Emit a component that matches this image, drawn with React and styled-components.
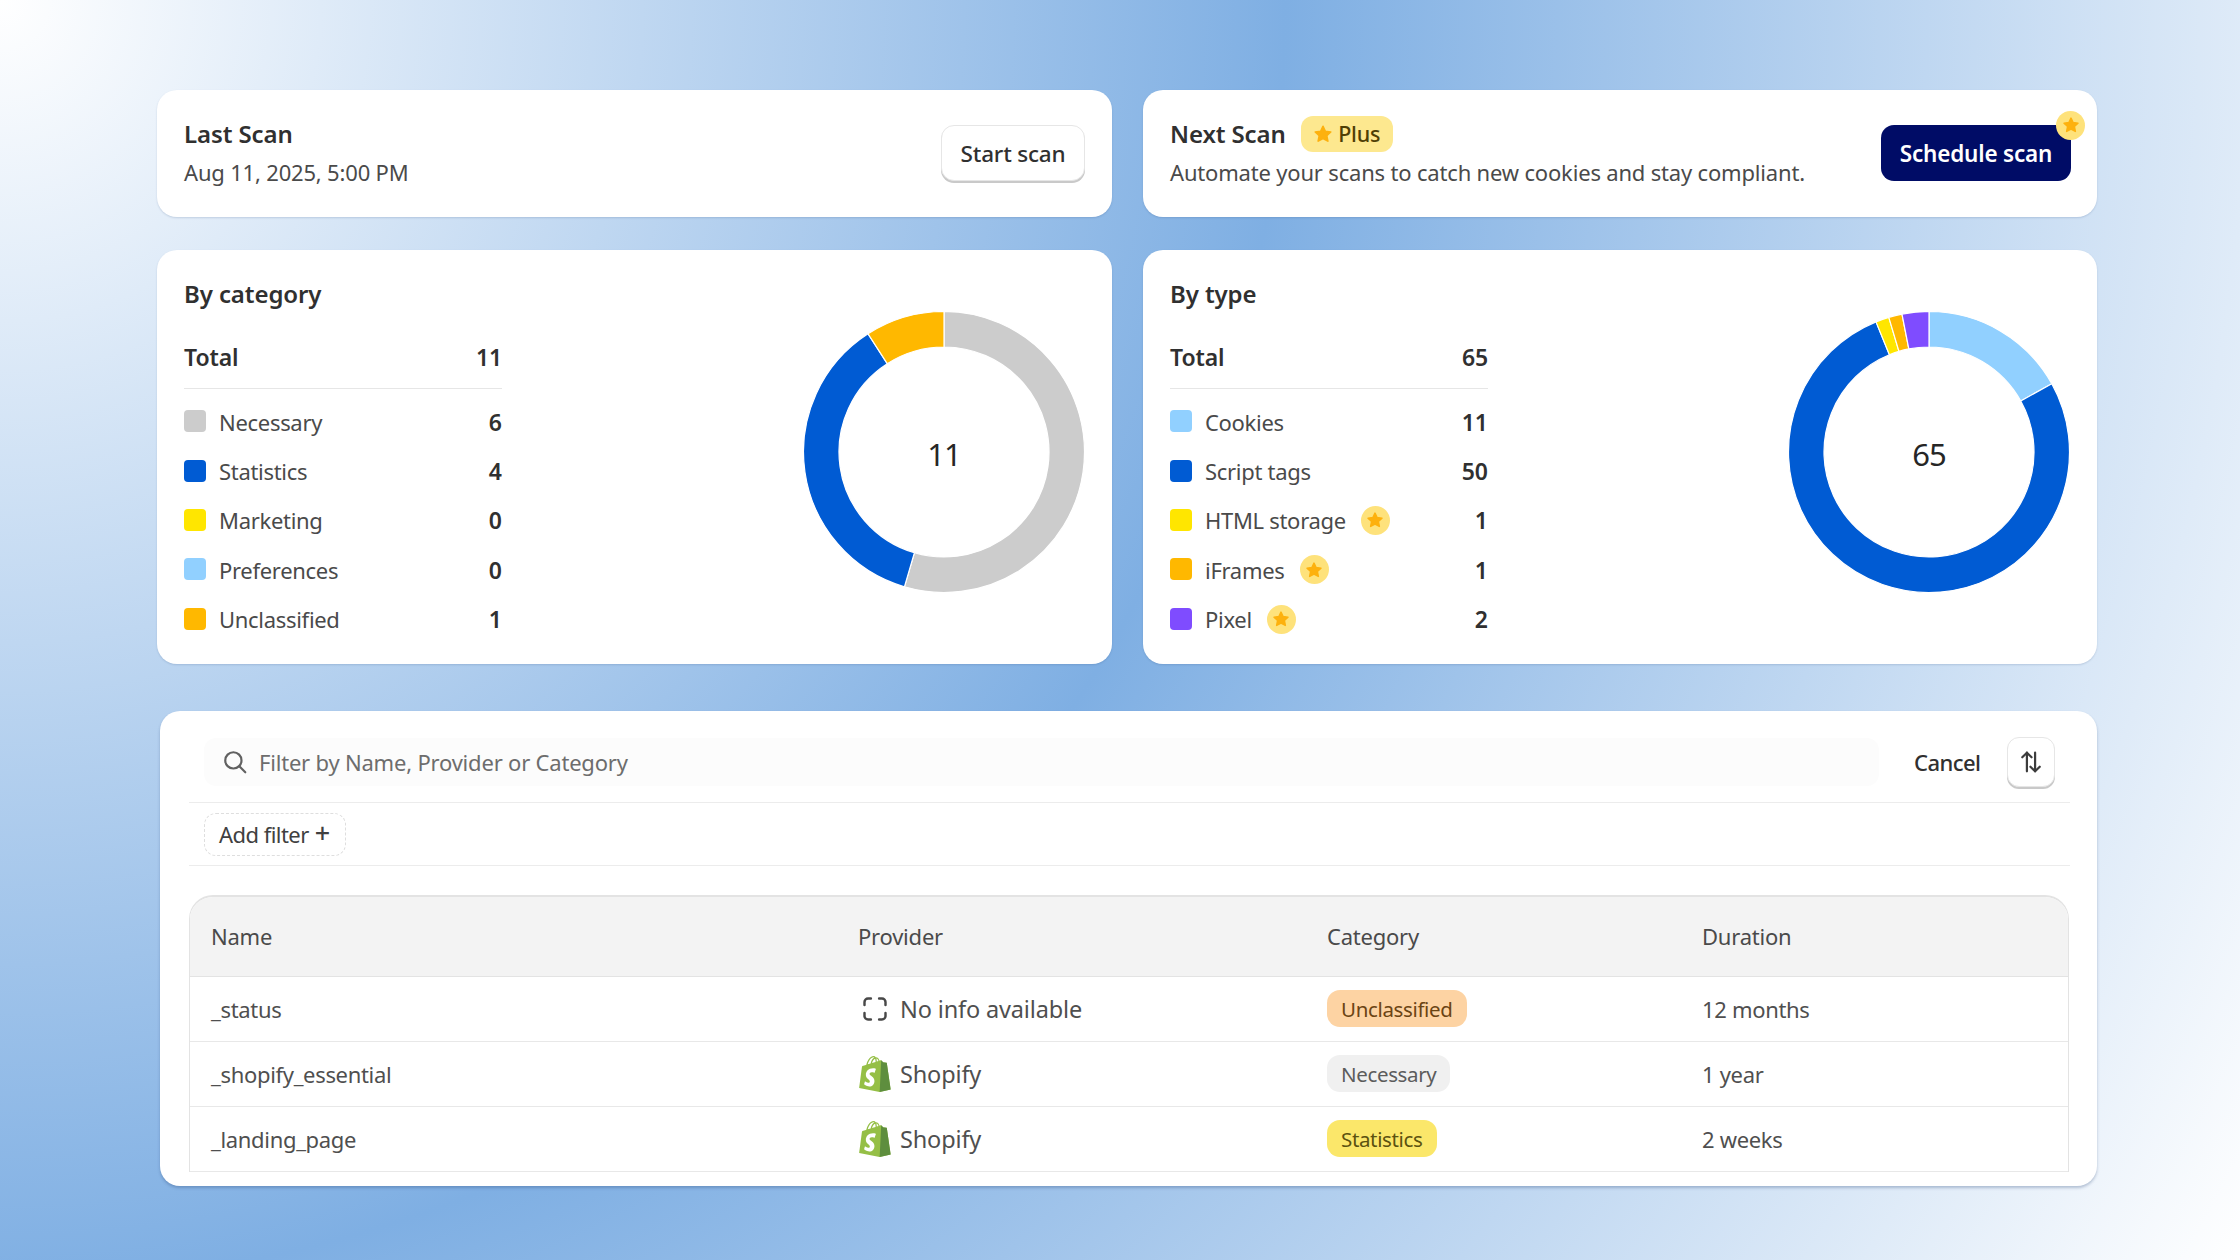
import React from 'react';
import styled, { createGlobalStyle } from 'styled-components';

const Global = createGlobalStyle`
  html, body { margin: 0; padding: 0; }
  body {
    width: 2240px; height: 1260px; overflow: hidden;
    font-family: "Noto Sans", "Open Sans", sans-serif;
    font-size: 22px; color: #303030;
    background: radial-gradient(circle farthest-corner at 0 0, #ffffff 0%, #7fafe3 50%, #ffffff 100%);
  }
  * { box-sizing: border-box; }
`;

const Page = styled.div`
  display: flex; flex-direction: column;
  padding: 90px 143px 0 157px;
  height: 1260px;
`;
const Grid = styled.div`
  display: grid; grid-template-columns: 955px 954px; column-gap: 31px; row-gap: 33px;
  grid-template-rows: 127px 414px;
`;
const Card = styled.section`
  background: #fff; border-radius: 20px;
  box-shadow: 0 1px 2px rgba(40, 70, 120, 0.18);
`;
const ScanCard = styled(Card)`
  display: flex; align-items: center; justify-content: space-between;
  padding: 0 27px 1px 27px;
`;
const ScanInfo = styled.div`
  display: flex; flex-direction: column; gap: 10px;
`;
const TitleRow = styled.div`
  display: flex; align-items: center; gap: 15px; height: 29px;
`;
const Title = styled.h2`
  margin: 0; font-size: 24px; font-weight: 600; line-height: 29px; color: #303030; letter-spacing: -0.1px;
`;
const Sub = styled.p`
  margin: 0; font-size: 22px; line-height: 29px; color: #4a4a4a; letter-spacing: -0.18px;
`;
const PlusBadge = styled.span`
  display: inline-flex; align-items: center; gap: 5px;
  width: 92px; height: 36px; justify-content: center;
  background: #fde88f; border-radius: 12px;
  font-size: 21.5px; font-weight: 500; color: #4f3f05; letter-spacing: -0.2px;
`;
const Button = styled.button`
  font: inherit; font-size: 22.5px; font-weight: 500; letter-spacing: -0.2px;
  height: 56px; border-radius: 13px; cursor: pointer; position: relative;
  display: inline-flex; align-items: center; justify-content: center;
`;
const GhostButton = styled(Button)`
  width: 144px; background: #fff; color: #303030;
  border: 1px solid #e6e6e6; box-shadow: 0 2px 0 #c9c9c9;
`;
const PrimaryButton = styled(Button)`
  width: 190px; margin-right: -1px; background: #000c66; color: #fff; border: none; font-weight: 600;
`;
const CornerBadge = styled.span`
  position: absolute; top: -15px; right: -14px;
`;
const StarDot = styled.span`
  display: inline-flex; width: 29px; height: 29px; border-radius: 50%;
  background: #fee27b; align-items: center; justify-content: center; flex: none;
`;

const StarSvg = styled.svg`
  display: block; fill: #fdb10e; stroke: #fdb10e; stroke-width: 2; stroke-linejoin: round;
`;
const Star = ({ size = 18 }) => (
  <StarSvg width={size} height={size} viewBox="0 0 24 24">
    <path d="M12 2.8l2.8 6 6.5.8-4.8 4.4 1.3 6.5-5.8-3.2-5.8 3.2 1.3-6.5L2.7 9.6l6.5-.8z" />
  </StarSvg>
);

const ChartCard = styled(Card)`
  display: flex; justify-content: space-between; align-items: flex-start;
  padding: 29px 27px 0 27px;
`;
const Legend = styled.div`
  width: 318px; display: flex; flex-direction: column;
`;
const TotalRow = styled.div`
  display: flex; justify-content: space-between; align-items: center;
  margin-top: 34px; padding-bottom: 16px; height: 47px;
  border-bottom: 1px solid #e6e6e6;
  font-weight: 600; font-size: 23px; line-height: 29px; letter-spacing: -0.1px;
`;
const LegendList = styled.div`
  display: flex; flex-direction: column; margin-top: 8px;
`;
const LegendRow = styled.div`
  display: flex; align-items: center; height: 49.4px;
`;
const Swatch = styled.span`
  width: 22px; height: 22px; border-radius: 4px; background: ${p => p.$c}; margin: -1px 13px 0 0; flex: none;
`;
const LegendLabel = styled.span`
  color: #4a4a4a; letter-spacing: -0.3px; margin-right: 15px;
`;
const LegendValue = styled.span`
  margin-left: auto; font-weight: 600; font-size: 23px; color: #303030;
`;
const DonutBox = styled.div`
  position: relative; width: 282px; height: 282px; margin-top: 32px; flex: none;
`;
const DonutValue = styled.span`
  position: absolute; inset: 4px 0 0 0; display: flex; align-items: center; justify-content: center;
  font-size: 31px; color: #262626; letter-spacing: -1px;
`;

function wedge(a0, a1) {
  const c = 141, R = 140.5, r = 105;
  const p = (rad, a) => `${c + rad * Math.sin(a)} ${c - rad * Math.cos(a)}`;
  const large = a1 - a0 > Math.PI ? 1 : 0;
  return `M${p(R, a0)}A${R} ${R} 0 ${large} 1 ${p(R, a1)}L${p(r, a1)}A${r} ${r} 0 ${large} 0 ${p(r, a0)}Z`;
}
const Donut = ({ items, total }) => {
  let acc = 0;
  return (
    <DonutBox>
      <svg width="282" height="282" viewBox="0 0 282 282">
        {items.filter(i => i.v > 0).map(i => {
          const a0 = (acc / total) * Math.PI * 2;
          acc += i.v;
          const a1 = (acc / total) * Math.PI * 2;
          return <path key={i.n} d={wedge(a0, a1)} fill={i.c} stroke="#fff" strokeWidth="1.2" />;
        })}
      </svg>
      <DonutValue>{total}</DonutValue>
    </DonutBox>
  );
};

const cat = [
  { n: 'Necessary', v: 6, c: '#cccccc' },
  { n: 'Statistics', v: 4, c: '#005bd3' },
  { n: 'Marketing', v: 0, c: '#ffe600' },
  { n: 'Preferences', v: 0, c: '#91d0ff' },
  { n: 'Unclassified', v: 1, c: '#ffb800' },
];
const typ = [
  { n: 'Cookies', v: 11, c: '#91d0ff' },
  { n: 'Script tags', v: 50, c: '#005bd3' },
  { n: 'HTML storage', v: 1, c: '#ffe600', star: true },
  { n: 'iFrames', v: 1, c: '#ffb800', star: true },
  { n: 'Pixel', v: 2, c: '#7f4cff', star: true },
];

const Chart = ({ title, items, total }) => (
  <ChartCard>
    <Legend>
      <Title>{title}</Title>
      <TotalRow><span>Total</span><span>{total}</span></TotalRow>
      <LegendList>
        {items.map(i => (
          <LegendRow key={i.n}>
            <Swatch $c={i.c} />
            <LegendLabel>{i.n}</LegendLabel>
            {i.star && <StarDot><Star /></StarDot>}
            <LegendValue>{i.v}</LegendValue>
          </LegendRow>
        ))}
      </LegendList>
    </Legend>
    <Donut items={items} total={total} />
  </ChartCard>
);

const TableCard = styled(Card)`
  margin: 47px 0 0 3px; width: 1937px; height: 475px;
  padding: 26px 27px 0 29px;
  box-shadow: 0 2px 3px rgba(40, 70, 120, 0.3);
`;
const SearchRow = styled.div`
  display: flex; align-items: center; height: 50px; padding-left: 15px;
`;
const SearchField = styled.div`
  display: flex; align-items: center; gap: 11px; flex: none;
  width: 1675px; height: 48px; margin-right: 35px; padding-left: 18px;
  background: #fcfcfc; border-radius: 12px;
  color: #6d6d6d; letter-spacing: -0.2px;
`;
const CancelText = styled.span`
  font-weight: 500; letter-spacing: -0.55px; color: #303030; width: 93px; flex: none;
`;
const SortButton = styled.button`
  width: 48px; height: 50px; padding: 0; background: #fff; flex: none;
  border: 1px solid #e6e6e6; border-radius: 12px; box-shadow: 0 2px 0 #c9c9c9;
  display: flex; align-items: center; justify-content: center;
`;
const FilterRow = styled.div`
  display: flex; align-items: center; height: 64px; margin-top: 15px;
  border-top: 1px solid #ececec; border-bottom: 1px solid #ececec; padding-left: 15px;
`;
const AddFilter = styled.span`
  display: inline-flex; align-items: center; gap: 6px; padding: 0 14px;
  width: 142px; height: 43px; border: 1px dashed #dedede; border-radius: 12px;
  letter-spacing: -0.55px; color: #404040; white-space: nowrap;
`;
const PlusMark = styled.span`
  font-size: 27px; line-height: 1; font-weight: 500; margin-top: -3px;
`;
const Table = styled.div`
  margin-top: 29px; border: 1px solid #e3e3e3; border-top-width: 2px; border-bottom: none;
  border-radius: 24px 24px 0 0; overflow: hidden; width: 1880px;
`;
const cols = '647px 469px 375px 1fr';
const HeadRow = styled.div`
  display: grid; grid-template-columns: ${cols}; align-items: center;
  height: 80px; background: #f3f3f3; border-bottom: 1px solid #e3e3e3;
  padding-bottom: 1px;
`;
const HeadCell = styled.span`
  padding-left: 21px; color: #4a4a4a; letter-spacing: -0.22px;
`;
const Row = styled.div`
  display: grid; grid-template-columns: ${cols}; align-items: center;
  height: 65px; padding-bottom: 1px; border-bottom: 1px solid #e8e8e8;
`;
const Cell = styled.span`
  padding-left: 21px; color: #4f4f4f; letter-spacing: -0.32px;
  display: flex; align-items: center;
`;
const ProviderCell = styled(Cell)`
  gap: 9px; padding-left: 22px; font-size: 23.5px; letter-spacing: -0.15px;
`;
const IconBox = styled.span`
  width: 32px; display: flex; justify-content: center; flex: none;
`;
const Pill = styled.span`
  display: inline-flex; align-items: center; height: 37px; padding: 0 14px;
  border-radius: 13px; background: ${p => p.$bg}; color: ${p => p.$fg}; font-size: 20.5px; letter-spacing: -0.35px;
`;

const Shopify = () => (
  <svg width="32" height="36" viewBox="0 0 256 292">
    <path d="M223.774 57.34c-.201-1.46-1.48-2.268-2.537-2.357-1.055-.088-23.383-1.743-23.383-1.743s-15.507-15.395-17.209-17.099c-1.703-1.703-5.029-1.185-6.32-.805-.19.056-3.388 1.043-8.678 2.68-5.18-14.906-14.322-28.604-30.405-28.604-.444 0-.901.018-1.358.044C129.31 3.407 123.644.779 118.75.779c-37.465 0-55.364 46.835-60.976 70.635-14.558 4.511-24.9 7.718-26.221 8.133-8.126 2.549-8.383 2.805-9.45 10.462C21.3 95.806.038 260.235.038 260.235l165.678 31.042 89.77-19.42S223.973 58.8 223.775 57.34zM156.49 40.848l-14.019 4.339c.005-.988.01-1.96.01-3.023 0-9.264-1.286-16.723-3.349-22.636 8.287 1.04 13.806 10.469 17.358 21.32zm-27.638-19.483c2.304 5.773 3.802 14.058 3.802 25.238 0 .572-.005 1.095-.01 1.624-9.117 2.824-19.024 5.89-28.953 8.966 5.575-21.516 16.025-31.908 25.161-35.828zm-11.131-10.537c1.617 0 3.246.549 4.805 1.622-12.007 5.65-24.877 19.88-30.312 48.297l-22.886 7.088C75.694 46.16 90.81 10.828 117.72 10.828z" fill="#95BF46" />
    <path d="M221.237 54.983c-1.055-.088-23.383-1.743-23.383-1.743s-15.507-15.395-17.209-17.099c-.637-.634-1.496-.959-2.394-1.099l-12.527 256.233 89.762-19.418S223.972 58.8 223.774 57.34c-.201-1.46-1.48-2.268-2.537-2.357" fill="#5E8E3E" />
    <path d="M135.242 104.585l-11.069 32.926s-9.698-5.176-21.586-5.176c-17.428 0-18.305 10.937-18.305 13.693 0 15.038 39.2 20.8 39.2 56.024 0 27.713-17.577 45.558-41.277 45.558-28.44 0-42.984-17.7-42.984-17.7l7.615-25.16s14.95 12.835 27.565 12.835c8.243 0 11.596-6.49 11.596-11.232 0-19.616-32.16-20.491-32.16-52.724 0-27.129 19.472-53.382 58.778-53.382 15.145 0 22.627 4.338 22.627 4.338" fill="#FFF" />
  </svg>
);
const ScanIcon = () => (
  <svg width="28" height="28" viewBox="0 0 24 24" fill="none" stroke="#484848" strokeWidth="2.1" strokeLinecap="round" strokeLinejoin="round">
    <path d="M3 8.5V6a3 3 0 0 1 3-3h2.5" />
    <path d="M15.5 3H18a3 3 0 0 1 3 3v2.5" />
    <path d="M21 15.5V18a3 3 0 0 1-3 3h-2.5" />
    <path d="M8.5 21H6a3 3 0 0 1-3-3v-2.5" />
  </svg>
);
const SearchIcon = () => (
  <svg width="26" height="26" viewBox="0 0 24 24" fill="none" stroke="#616161" strokeWidth="2" strokeLinecap="round">
    <circle cx="10.5" cy="10.5" r="7.5" />
    <path d="M16 16l5.5 5.5" />
  </svg>
);
const SortIcon = () => (
  <svg width="28" height="28" viewBox="0 0 24 24" fill="none" stroke="#3c3c3c" strokeWidth="1.9" strokeLinecap="round" strokeLinejoin="round">
    <path d="M8.5 20V4" /><path d="M4.5 8l4-4 4 4" />
    <path d="M15.5 4v16" /><path d="M11.5 16l4 4 4-4" />
  </svg>
);

const rows = [
  { name: '_status', prov: 'No info available', icon: <ScanIcon />, pill: 'Unclassified', bg: '#fdd3a3', fg: '#6b4413', dur: '12 months' },
  { name: '_shopify_essential', prov: 'Shopify', icon: <Shopify />, pill: 'Necessary', bg: '#f0f0f0', fg: '#5c5c5c', dur: '1 year' },
  { name: '_landing_page', prov: 'Shopify', icon: <Shopify />, pill: 'Statistics', bg: '#fbe76a', fg: '#5c5210', dur: '2 weeks' },
];

export default function App() {
  return (
    <>
      <Global />
      <Page>
        <Grid>
          <ScanCard>
            <ScanInfo>
              <TitleRow><Title>Last Scan</Title></TitleRow>
              <Sub>Aug 11, 2025, 5:00 PM</Sub>
            </ScanInfo>
            <GhostButton>Start scan</GhostButton>
          </ScanCard>
          <ScanCard>
            <ScanInfo>
              <TitleRow>
                <Title>Next Scan</Title>
                <PlusBadge><Star size={20} />Plus</PlusBadge>
              </TitleRow>
              <Sub>Automate your scans to catch new cookies and stay compliant.</Sub>
            </ScanInfo>
            <PrimaryButton>
              Schedule scan
              <CornerBadge><StarDot><Star /></StarDot></CornerBadge>
            </PrimaryButton>
          </ScanCard>
          <Chart title="By category" items={cat} total={11} />
          <Chart title="By type" items={typ} total={65} />
        </Grid>
        <TableCard>
          <SearchRow>
            <SearchField><SearchIcon />Filter by Name, Provider or Category</SearchField>
            <CancelText>Cancel</CancelText>
            <SortButton><SortIcon /></SortButton>
          </SearchRow>
          <FilterRow><AddFilter>Add filter <PlusMark>+</PlusMark></AddFilter></FilterRow>
          <Table>
            <HeadRow>
              <HeadCell>Name</HeadCell><HeadCell>Provider</HeadCell>
              <HeadCell>Category</HeadCell><HeadCell>Duration</HeadCell>
            </HeadRow>
            {rows.map(r => (
              <Row key={r.name}>
                <Cell>{r.name}</Cell>
                <ProviderCell><IconBox>{r.icon}</IconBox>{r.prov}</ProviderCell>
                <Cell><Pill $bg={r.bg} $fg={r.fg}>{r.pill}</Pill></Cell>
                <Cell>{r.dur}</Cell>
              </Row>
            ))}
          </Table>
        </TableCard>
      </Page>
    </>
  );
}
